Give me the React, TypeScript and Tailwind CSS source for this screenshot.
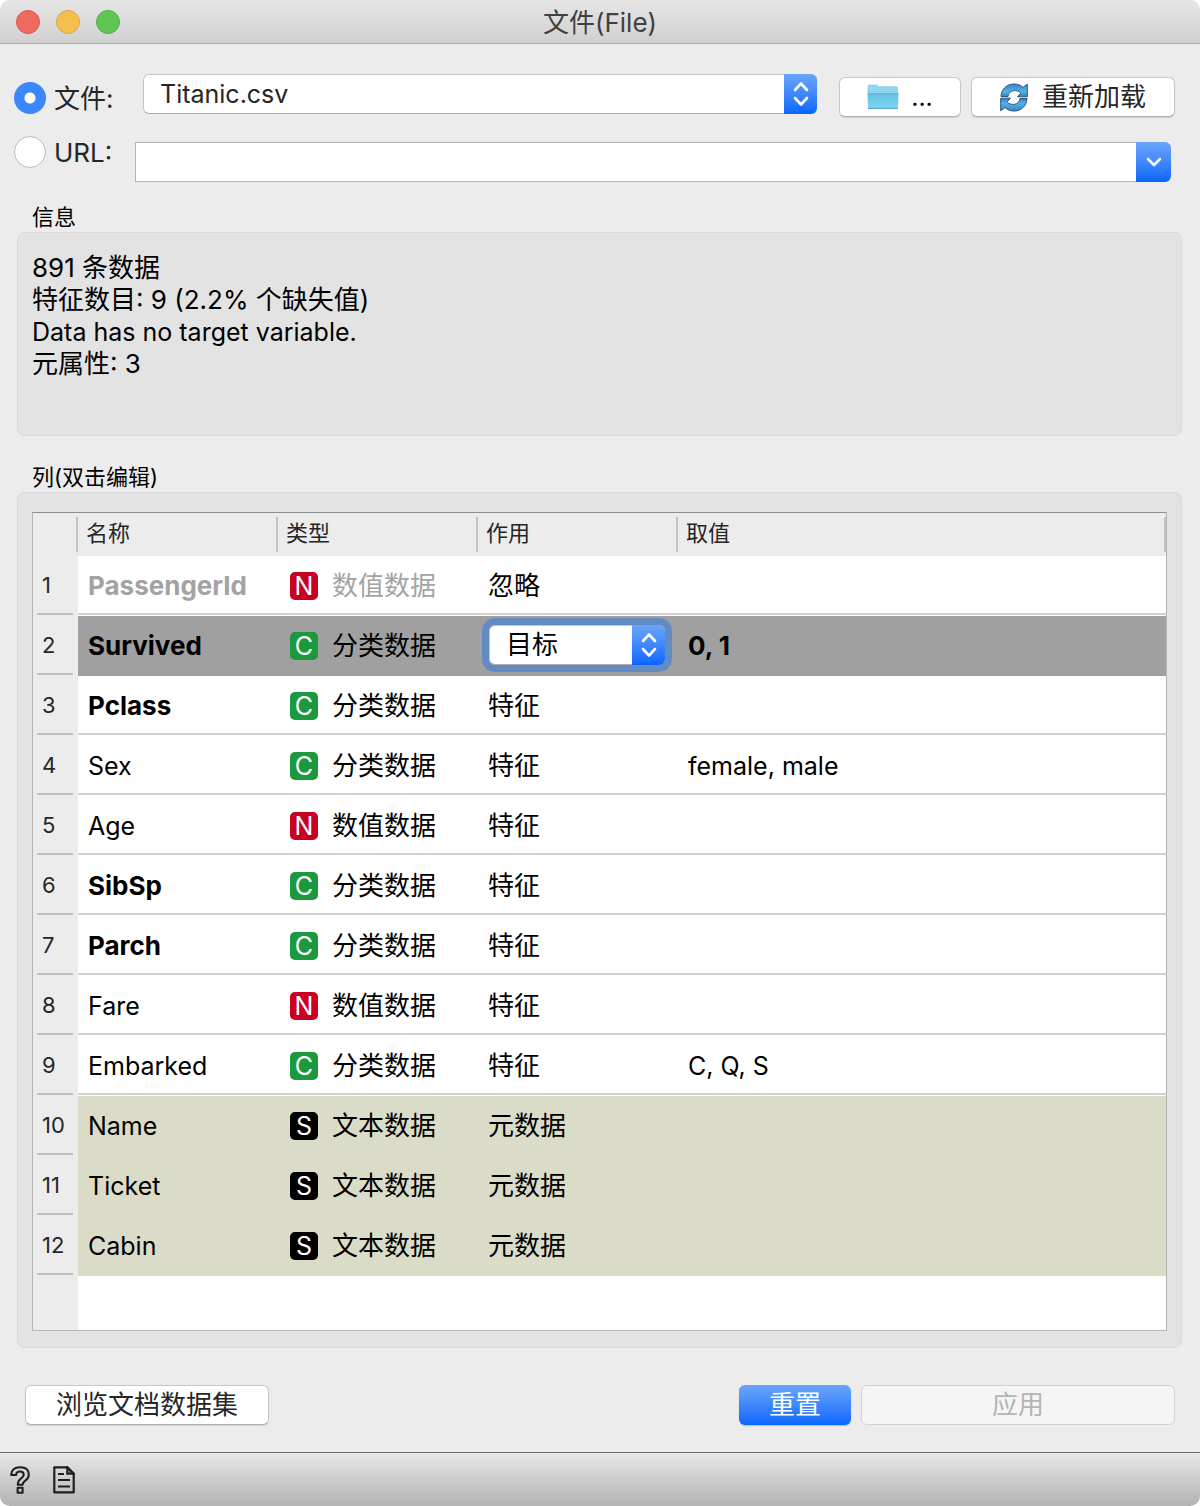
import type { ReactNode } from 'react';

type Kind = 'N' | 'C' | 'S';
type Row = {
  name: string;
  kind: Kind;
  role: string;
  values?: string;
  bold?: boolean;
  ignored?: boolean;
  selected?: boolean;
};

const rows: Row[] = [
  { name: 'PassengerId', kind: 'N', role: '忽略', bold: true, ignored: true },
  { name: 'Survived', kind: 'C', role: '目标', values: '0, 1', bold: true, selected: true },
  { name: 'Pclass', kind: 'C', role: '特征', bold: true },
  { name: 'Sex', kind: 'C', role: '特征', values: 'female, male' },
  { name: 'Age', kind: 'N', role: '特征' },
  { name: 'SibSp', kind: 'C', role: '特征', bold: true },
  { name: 'Parch', kind: 'C', role: '特征', bold: true },
  { name: 'Fare', kind: 'N', role: '特征' },
  { name: 'Embarked', kind: 'C', role: '特征', values: 'C, Q, S' },
  { name: 'Name', kind: 'S', role: '元数据' },
  { name: 'Ticket', kind: 'S', role: '元数据' },
  { name: 'Cabin', kind: 'S', role: '元数据' },
];

const kindLabel: Record<Kind, string> = { N: '数值数据', C: '分类数据', S: '文本数据' };
const kindColor: Record<Kind, string> = {
  N: 'bg-[#c9001f]',
  C: 'bg-[#1c983f]',
  S: 'bg-black',
};

const blue = 'bg-linear-to-b from-[#6aa5fb] to-[#0565fe]';
const pushButton =
  'h-10 rounded-md border border-[#c8c8c8] border-b-[#b0b0b0] bg-white shadow-[0_1px_1px_rgba(0,0,0,0.12)]';

function UpDown() {
  return (
    <svg viewBox="0 0 16 26" className="h-[26px] w-4" fill="none" stroke="white" strokeWidth="2.6" strokeLinecap="round" strokeLinejoin="round">
      <path d="M2 9 8 2.5 14 9M2 17l6 6.5 6-6.5" />
    </svg>
  );
}

function PopupSelect({ id, label, options, className }: { id: string; label: string; options: string[]; className: string }) {
  return (
    <div className={`relative h-10 rounded-md ${className}`}>
      <select
        id={id}
        aria-label={label}
        className="h-full w-full appearance-none rounded-md border border-[#c4c4c4] border-b-[#adadad] bg-white pr-10 pl-4 outline-none"
      >
        {options.map((o) => (
          <option key={o}>{o}</option>
        ))}
      </select>
      <span className={`pointer-events-none absolute inset-y-0 right-0 flex w-[33px] items-center justify-center rounded-r-md ${blue}`}>
        <UpDown />
      </span>
    </div>
  );
}

function Radio({ id, children, checked }: { id: string; children: ReactNode; checked?: boolean }) {
  return (
    <label htmlFor={id} className="flex h-8 items-center gap-2 whitespace-nowrap text-[26px] text-[#262626]">
      <input
        id={id}
        type="radio"
        name="source"
        defaultChecked={checked}
        className="size-8 appearance-none rounded-full border border-[#bdbdbd] bg-white checked:border-0 checked:bg-[radial-gradient(circle,white_5px,#3b87fd_6px)]"
      />
      <span className="pt-0.5">{children}</span>
    </label>
  );
}

function FolderIcon() {
  return (
    <svg viewBox="0 0 32 26" className="h-[26px] w-8">
      <defs>
        <linearGradient id="folder" x1="0" y1="0" x2="0" y2="1">
          <stop offset="0" stopColor="#5bb6da" />
          <stop offset="0.3" stopColor="#6cc8e9" />
          <stop offset="1" stopColor="#7ed3f0" />
        </linearGradient>
      </defs>
      <path d="M1 8V2.2Q1 1 2.2 1h7.3q.9 0 1.4.7l.8 1.1h17.6q1.2 0 1.2 1.2v4z" fill="#8fd8f3" stroke="#6fbddb" strokeWidth=".6" />
      <path d="M.4 8.5h31.2l-.6 15q-.1 1.200-1.300 1.200H2.300q-1.200 0-1.300-1.200z" fill="url(#folder)" />
      <path d="M1.200 24.400h29.600" stroke="#4fa3c4" strokeWidth="1" />
    </svg>
  );
}

function ReloadIcon() {
  const d = 'M1 13.500C1.300 6 7 1 14 1c3.600 0 6.600 1.200 9 3.400L27.300 1.200V13.800H17.500l3.300-3.600C17.500 5.800 8.300 7 8 13.500z';
  return (
    <svg viewBox="0 0 28 29" className="h-[29px] w-7">
      <defs>
        <linearGradient id="reload" x1="0" y1="0" x2="0" y2="1">
          <stop offset="0" stopColor="#2f86c8" />
          <stop offset="0.6" stopColor="#55b1ea" />
          <stop offset="1" stopColor="#2d7fc0" />
        </linearGradient>
      </defs>
      <g fill="url(#reload)" stroke="#2f5578" strokeWidth="1" strokeLinejoin="round">
        <path d={d} />
        <path d={d} transform="rotate(180 14 14.500)" />
      </g>
    </svg>
  );
}

function HelpIcon() {
  return (
    <svg viewBox="0 0 20 28" className="h-7 w-5" fill="none" stroke="#1f1f1f" strokeWidth="2.1" strokeLinejoin="round">
      <path d="M1.200 9C1.200 4 4.500 1.200 10 1.200s8.800 2.800 8.800 7.400c0 3.200-1.600 4.800-3.800 6.300-1.800 1.200-2.400 2-2.400 3.900H7.800c0-3.200.8-4.600 3.200-6.300 1.800-1.300 2.700-2.200 2.700-3.800 0-2-1.400-3.200-3.700-3.200S6.200 6.700 6.100 9z" />
      <path d="M7.600 21.800h5v5h-5z" />
    </svg>
  );
}

function ReportIcon() {
  return (
    <svg viewBox="0 0 22 28" className="h-7 w-[22px]" fill="none" stroke="#1f1f1f" strokeWidth="2.2">
      <path d="M1.300 1.300h13l6.400 6.400v18.600H1.300z" strokeLinejoin="round" />
      <path d="M14.300 1.300v6.400h6.400z" fill="#1f1f1f" fillOpacity="0.35" />
      <path d="M5 8h6M5 14h12M5 20.500h12" />
    </svg>
  );
}

export default function App() {
  return (
    <div className="flex min-h-screen flex-col overflow-hidden rounded-[10px] bg-[#ececec] font-[Inter,'Noto_Sans_CJK_SC',sans-serif] text-[25px] leading-8 text-black">
      <header className="relative flex h-11 items-center justify-center border-b border-[#acacac] bg-linear-to-b from-[#e6e6e6] to-[#d0d0d0]">
        <div className="absolute left-4 flex gap-4">
          <button aria-label="关闭" className="size-6 rounded-full border border-[#d9574f] bg-[#ee6a5f]" />
          <button aria-label="最小化" className="size-6 rounded-full border border-[#dba73f] bg-[#f5bf4f]" />
          <button aria-label="缩放" className="size-6 rounded-full border border-[#50b042] bg-[#61c554]" />
        </div>
        <h1 className="pt-0.5 text-[26px] text-[#404040]">文件(File)</h1>
      </header>

      <main className="flex grow flex-col">
        <div className="flex items-start pt-[30px] pr-[25px] pl-[14px]">
          <div className="mt-2 w-[129px]">
            <Radio id="src-file" checked>
              文件:
            </Radio>
          </div>
          <PopupSelect id="file" label="文件" options={['Titanic.csv']} className="grow text-[#262626]" />
          <button className={`mt-[3px] ml-[22px] flex w-[122px] items-center justify-center gap-3 ${pushButton}`}>
            <FolderIcon />
            <span>...</span>
          </button>
          <button className={`mt-[3px] ml-[10px] flex w-[204px] items-center justify-center gap-[14px] text-[26px] text-[#262626] ${pushButton}`}>
            <ReloadIcon />
            重新加载
          </button>
        </div>

        <div className="mt-[19px] flex items-start pr-[29px] pl-[14px]">
          <div className="w-[121px]">
            <Radio id="src-url">URL:</Radio>
          </div>
          <div className="mt-[6px] flex h-10 grow">
            <input aria-label="URL" className="min-w-0 grow border border-r-0 border-[#b4b4b4] bg-white px-3 outline-none" />
            <button aria-label="历史记录" className={`flex w-[35px] items-center justify-center rounded-r-md ${blue}`}>
              <svg viewBox="0 0 16 10" className="h-[10px] w-4" fill="none" stroke="white" strokeWidth="2.6" strokeLinecap="round" strokeLinejoin="round">
                <path d="M2 2l6 6 6-6" />
              </svg>
            </button>
          </div>
        </div>

        <section className="mt-5 mr-[18px] ml-[17px]">
          <h2 className="h-[30px] pl-[15px] text-[22px] leading-[30px]">信息</h2>
          <div className="h-[204px] rounded-lg border border-[#d9d9d9] bg-[#e3e3e3] px-[14px] pt-[19px] text-[26px] leading-8">
            <p>891 条数据</p>
            <p>特征数目: 9 (2.2% 个缺失值)</p>
            <p className="text-[25px]">Data has no target variable.</p>
            <p>元属性: 3</p>
          </div>
        </section>

        <section className="mt-[26px] mr-[18px] ml-[17px] flex grow flex-col">
          <h2 className="h-[30px] pl-[15px] text-[22px] leading-[30px]">列(双击编辑)</h2>
          <div className="flex grow flex-col rounded-lg border border-[#d9d9d9] bg-[#e3e3e3] px-[14px] pt-[19px] pb-4">
            <div className="flex grow flex-col border border-[#b5b5b5] border-t-[#8f8f8f] bg-white">
              <table className="w-full table-fixed border-collapse text-left">
                <colgroup>
                  <col className="w-[45px]" />
                  <col className="w-[200px]" />
                  <col className="w-[200px]" />
                  <col className="w-[200px]" />
                  <col />
                </colgroup>
                <thead>
                  <tr className="h-[43px] bg-[#ececec] align-top">
                    {['', '名称', '类型', '作用', '取值'].map((h) => (
                      <th key={h} scope="col" className="p-0 pt-1 font-normal">
                        <div className="h-[35px] border-r-2 border-[#c3c3c3] pl-2 text-[22px] leading-[32px] text-[#262626]">{h}</div>
                      </th>
                    ))}
                  </tr>
                </thead>
                <tbody>
                  {rows.map((r, i) => {
                    const meta = r.kind === 'S';
                    const bg = r.selected ? 'bg-[#a0a0a0]' : meta ? 'bg-[#dbdcc8]' : 'bg-white';
                    const line = r.selected || meta ? 'border-transparent' : 'border-[#d2d2d2]';
                    const cell = `flex h-[59px] items-center border-b-2 pt-[3px] ${line}`;
                    const weight = r.bold ? 'text-[26px] font-bold' : '';
                    const tone = r.ignored ? 'text-[#a3a3a3]' : '';
                    return (
                      <tr key={r.name} className={`h-[60px] align-top ${bg}`}>
                        <th scope="row" className="bg-[#ececec] p-0 font-normal">
                          <div className="mr-[5px] ml-1 flex h-[59px] items-center border-b-2 border-[#bfbfbf] pl-[5px] text-[22px] text-[#262626]">
                            {i + 1}
                          </div>
                        </th>
                        <td className="p-0">
                          <div className={`pl-[10px] ${cell} ${weight} ${tone}`}>{r.name}</div>
                        </td>
                        <td className="p-0">
                          <div className={`gap-[14px] pl-3 text-[26px] ${cell} ${tone}`}>
                            <span className={`flex size-7 items-center justify-center rounded-[5px] text-[25px] text-white ${kindColor[r.kind]}`}>
                              {r.kind}
                            </span>
                            {kindLabel[r.kind]}
                          </div>
                        </td>
                        <td className="p-0">
                          {r.selected ? (
                            <div className="pt-[9px] pl-[11px] text-[26px]">
                              <PopupSelect
                                id="role"
                                label="作用"
                                options={['目标', '特征', '元数据', '忽略']}
                                className="w-[176px] ring-7 ring-[#628bc4]"
                              />
                            </div>
                          ) : (
                            <div className={`pl-[10px] text-[26px] ${cell}`}>{r.role}</div>
                          )}
                        </td>
                        <td className="p-0">
                          <div className={`pl-[10px] ${cell} ${weight}`}>{r.values}</div>
                        </td>
                      </tr>
                    );
                  })}
                </tbody>
              </table>
              <div className="w-[45px] grow bg-[#ececec]" />
            </div>
          </div>
        </section>

        <div className="mt-[37px] mb-[27px] flex pr-[25px] pl-[25px] text-[26px]">
          <button className={`w-[244px] text-[#262626] ${pushButton}`}>浏览文档数据集</button>
          <button className={`ml-auto h-10 w-[112px] rounded-md text-white shadow-[0_1px_1px_rgba(0,0,0,0.2)] ${blue}`}>重置</button>
          <button disabled className="ml-[10px] h-10 w-[314px] rounded-md border border-[#d2d2d2] bg-[#f5f5f5] text-[#b4b4b4]">
            应用
          </button>
        </div>
      </main>

      <footer className="flex h-[54px] items-center gap-[23px] border-t border-[#6e6e6e] bg-linear-to-b from-[#e8e8e8] to-[#b3b3b3] pl-[10px]">
        <button aria-label="帮助">
          <HelpIcon />
        </button>
        <button aria-label="报告">
          <ReportIcon />
        </button>
      </footer>
    </div>
  );
}
